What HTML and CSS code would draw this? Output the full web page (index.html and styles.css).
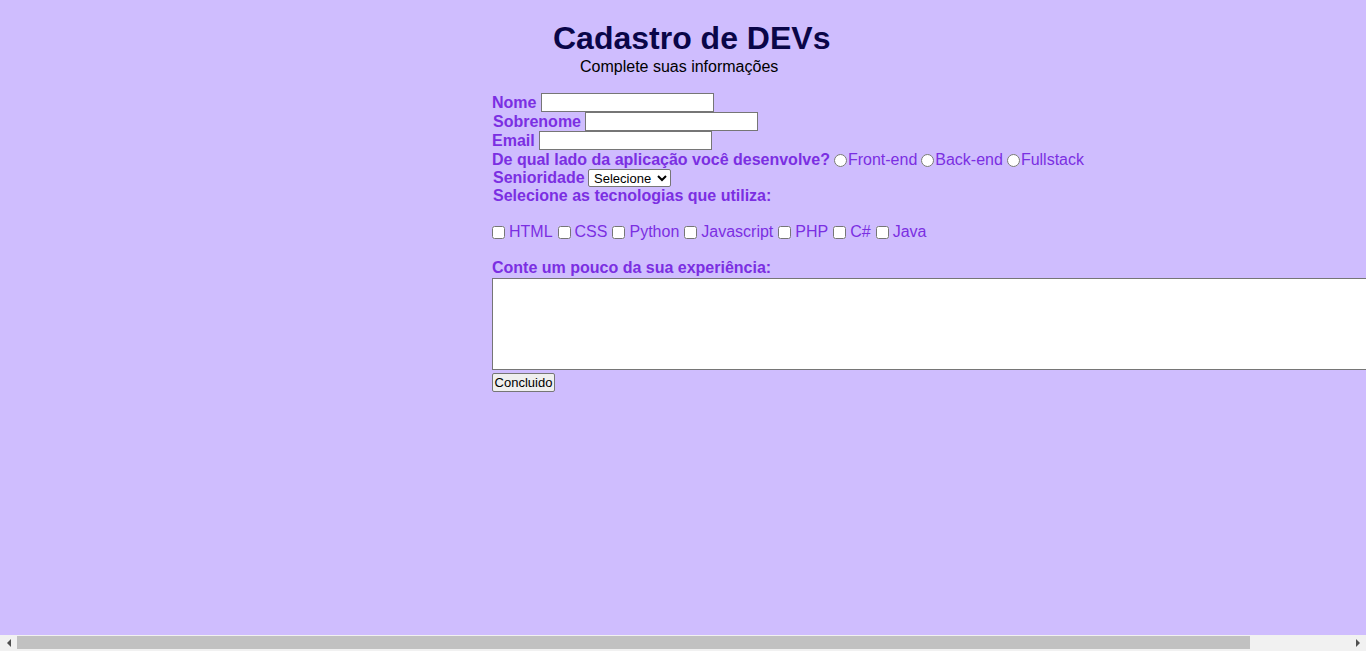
FILE: index.html
```html
<!DOCTYPE html>
<html lang="pt-BR">
<head>
<meta charset="utf-8">
<title>Cadastro de DEVs</title>
<link rel="stylesheet" href="styles.css">
</head>
<body>
<div class="page">
  <header class="header">
    <h1 class="title">Cadastro de DEVs</h1>
    <p class="subtitle">Complete suas informações</p>
  </header>
  <form class="form">
    <div class="row"><label class="lbl" for="nome">Nome</label><input class="txt" id="nome" type="text"></div>
    <div class="row"><label class="lbl shift" for="sobrenome">Sobrenome</label><input class="txt narrow" id="sobrenome" type="text"></div>
    <div class="row"><label class="lbl" for="email">Email</label><input class="txt" id="email" type="email"></div>
    <div class="row"><span class="lbl">De qual lado da aplicação você desenvolve?</span><input class="radio" type="radio" name="lado" id="fe"><label class="opt" for="fe">Front-end</label><input class="radio" type="radio" name="lado" id="be"><label class="opt" for="be">Back-end</label><input class="radio" type="radio" name="lado" id="fs"><label class="opt" for="fs">Fullstack</label></div>
    <div class="row short"><label class="lbl shift" for="sen">Senioridade</label><select class="sel" id="sen"><option>Selecione</option><option>Júnior</option><option>Pleno</option><option>Sênior</option></select></div>
    <div class="row short"><span class="lbl shift">Selecione as tecnologias que utiliza:</span></div>
    <div class="blank"></div>
    <div class="row short checks">
      <input class="chk" type="checkbox" id="t1"><label class="opt tech" for="t1">HTML</label>
      <input class="chk" type="checkbox" id="t2"><label class="opt tech" for="t2">CSS</label>
      <input class="chk" type="checkbox" id="t3"><label class="opt tech" for="t3">Python</label>
      <input class="chk" type="checkbox" id="t4"><label class="opt tech" for="t4">Javascript</label>
      <input class="chk" type="checkbox" id="t5"><label class="opt tech" for="t5">PHP</label>
      <input class="chk" type="checkbox" id="t6"><label class="opt tech" for="t6">C#</label>
      <input class="chk" type="checkbox" id="t7"><label class="opt tech" for="t7">Java</label>
    </div>
    <div class="blank"></div>
    <div class="row short"><label class="lbl" for="exp">Conte um pouco da sua experiência:</label></div>
    <textarea class="area" id="exp"></textarea>
    <div class="actions"><button class="btn" type="submit">Concluido</button></div>
  </form>
</div>
<div class="hscroll" aria-hidden="true">
  <span class="arrow arrow-left"></span>
  <span class="track"><span class="thumb"></span></span>
  <span class="arrow arrow-right"></span>
</div>
</body>
</html>
```

FILE: styles.css
```css
html, body {
  margin: 0;
  padding: 0;
}
body {
  background: #cfbdfe;
  font-family: "Liberation Sans", Arial, sans-serif;
  font-size: 16px;
}
.page {
  padding: 20px 8px 40px 492px;
  width: 976px;
}
.header {
  display: flex;
  flex-direction: column;
}
.title {
  margin: 0 0 2px 61px;
  font-size: 32px;
  line-height: 36px;
  font-weight: bold;
  color: #0a0648;
}
.subtitle {
  margin: 0 0 0 88px;
  font-size: 16px;
  line-height: 18px;
  color: #000;
}
.form {
  margin-top: 17px;
  color: #7b2fe2;
}
.row {
  display: flex;
  align-items: center;
  height: 19px;
  line-height: 19px;
  white-space: nowrap;
}
.row.short {
  height: 18px;
  line-height: 18px;
}
.blank {
  height: 18px;
}
.lbl {
  font-weight: bold;
}
.shift {
  margin-left: 1px;
}
.opt {
  font-weight: normal;
}
.txt {
  box-sizing: border-box;
  width: 173px;
  height: 19px;
  margin: 0 0 0 4.5px;
  padding: 1px 2px;
  border: 1px solid #767676;
  background: #fff;
  font-size: 13px;
}
.txt.narrow {
  margin-left: 3.5px;
}
.radio {
  width: 13px;
  height: 13px;
  margin: 1px 1px 0 4px;
}
.sel {
  box-sizing: border-box;
  width: 83px;
  height: 18px;
  margin: 0 0 0 3.5px;
  padding: 0 0 0 1px;
  font-family: "Liberation Sans", Arial, sans-serif;
  font-size: 13px;
  color: #000;
  background: #fff;
  border: 1px solid #767676;
  border-radius: 2px;
}
.chk {
  width: 13px;
  height: 13px;
  margin: 0 4px 0 0;
}
.tech {
  margin-right: 5px;
}
.area {
  display: block;
  box-sizing: border-box;
  width: 976px;
  height: 92px;
  margin: 1px 0 0 0;
  border: 1px solid #767676;
  background: #fff;
  resize: none;
}
.actions {
  margin-top: 3px;
}
.btn {
  box-sizing: border-box;
  height: 19px;
  width: 63px;
  padding: 0;
  font-family: "Liberation Sans", Arial, sans-serif;
  font-size: 13px;
  color: #000;
  background: #efefef;
  border: 1px solid #767676;
  border-radius: 2px;
}
.hscroll {
  position: fixed;
  left: 0;
  right: 0;
  bottom: 0;
  height: 16px;
  background: #f1f1f1;
  display: flex;
  align-items: center;
}
.arrow {
  width: 17px;
  height: 16px;
  display: flex;
  align-items: center;
  justify-content: center;
}
.arrow::before {
  content: "";
  width: 0;
  height: 0;
  border-top: 4px solid transparent;
  border-bottom: 4px solid transparent;
}
.arrow-left::before {
  border-right: 4px solid #505050;
}
.arrow-right::before {
  border-left: 4px solid #505050;
}
.track {
  flex: 1;
  height: 16px;
  display: flex;
  align-items: flex-start;
}
.thumb {
  margin-top: 1px;
  width: 1233px;
  height: 13px;
  background: #c1c1c1;
}
```
